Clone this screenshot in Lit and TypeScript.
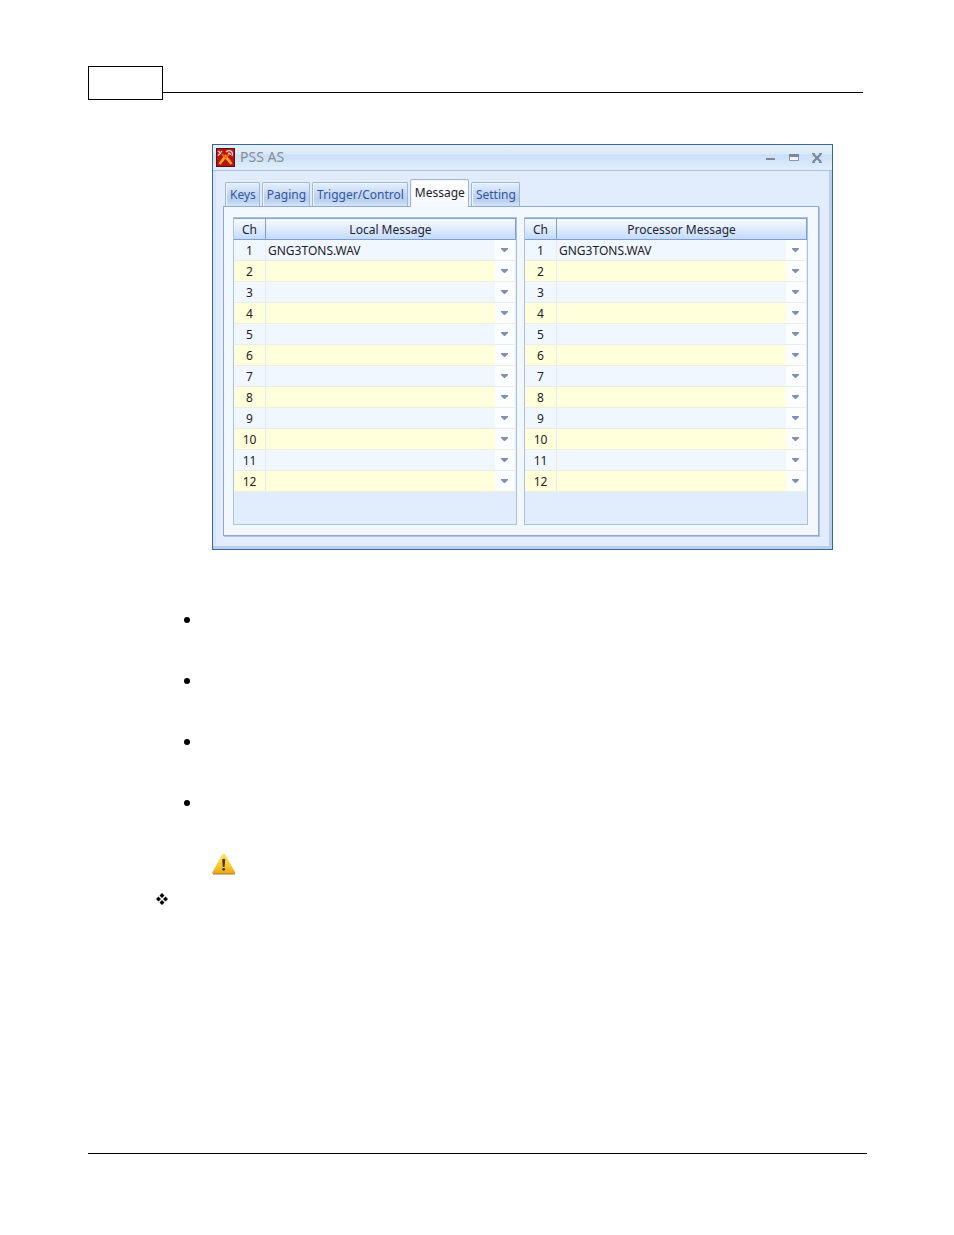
import { LitElement, html, css, svg } from "lit";
import { customElement, property, state } from "lit/decorators.js";

const CHANNELS = Array.from({ length: 12 }, (_, i) => i + 1);
const TABS = ["Keys", "Paging", "Trigger/Control", "Message", "Setting"];

@customElement("message-table")
class MessageTable extends LitElement {
  @property() heading = "";
  @property() file = "";

  static styles = css`
    :host {
      display: block;
      flex: 1;
      min-width: 0;
      min-height: 306px;
      border: 1px solid #a9c2e2;
      background: #e1ecfc;
    }
    .grid {
      width: 100%;
      border-collapse: separate;
      border-spacing: 0;
      table-layout: fixed;
      font-size: 12px;
      line-height: 18px;
      color: #222;
    }
    .ch-col {
      width: 32px;
    }
    .head {
      height: 22px;
      padding: 2px 0 0;
      box-sizing: border-box;
      font-weight: normal;
      color: #1c2430;
      background: linear-gradient(#f8fbff, #e2edfc 45%, #c4dbfa);
      border: 1px solid #7f9fd0;
      border-left: 0;
      border-top-color: #84a2cc;
    }
    .cell {
      height: 21px;
      padding: 2px 0 0;
      box-sizing: border-box;
      text-align: center;
      background: #f0f7ff;
      border-bottom: 1px solid #e6eef4;
      border-right: 1px solid #e4ecf2;
    }
    .cell.pick {
      padding: 0;
    }
    .even .cell {
      background: #ffffdc;
      border-bottom-color: #efefe0;
    }
    .field {
      display: grid;
      grid-template-columns: 1fr 20px;
    }
    .select {
      grid-area: 1 / 1 / 2 / 3;
      appearance: none;
      width: 100%;
      height: 20px;
      margin: 0;
      padding: 2px 20px 0 2px;
      border: 0;
      border-radius: 0;
      background: transparent;
      font: inherit;
      color: #222;
    }
    .arrow {
      grid-area: 1 / 2;
      width: 20px;
      height: 20px;
      background: #fbfdff;
      pointer-events: none;
    }
  `;

  render() {
    return html`
      <table class="grid">
        <colgroup>
          <col class="ch-col" />
          <col />
        </colgroup>
        <thead>
          <tr>
            <th class="head" scope="col">Ch</th>
            <th class="head" scope="col">${this.heading}</th>
          </tr>
        </thead>
        <tbody>
          ${CHANNELS.map(
            (n) => html`<tr class=${n % 2 ? "odd" : "even"}>
              <td class="cell">${n}</td>
              <td class="cell pick">
                <div class="field">
                  <select class="select" aria-label="${this.heading} ${n}">
                    <option>${n === 1 ? this.file : ""}</option>
                  </select>
                  <svg class="arrow" viewBox="0 0 20 20" aria-hidden="true">
                    <path d="M6 8h7v1l-3 3h-1l-3-3z" fill="#7f90b0" />
                  </svg>
                </div>
              </td>
            </tr>`
          )}
        </tbody>
      </table>
    `;
  }
}

const appIcon = svg`
  <rect width="19" height="19" fill="#5e1010" />
  <rect x="1" y="1" width="17" height="17" fill="#b91313" />
  <path d="M3.500 16 9.500 8.500 15.500 16" fill="none" stroke="#ffa51c" stroke-width="2.800" />
  <path d="M9.500 10 6 6M9.500 10l3.500-4" stroke="#f46a14" stroke-width="1.800" />
  <path d="M2 3l2.500 2-2.500 2.500M5 3l1 1" fill="none" stroke="#ffd9c8" stroke-width="1.400" />
  <path d="M10 4q3-3 6 0 1 2 0 4M12 5.500q2-1 2.500 1.500" fill="none" stroke="#ffd0c0" stroke-width="1.400" />`;

@customElement("app-root")
class AppRoot extends LitElement {
  @state() private active = "Message";

  static styles = css`
    :host {
      display: block;
      background: #fff;
      font-family: "Noto Sans", "Open Sans", sans-serif;
    }
    .page {
      display: flex;
      flex-direction: column;
      min-height: 100vh;
      box-sizing: border-box;
      padding: 66px 87px 81px 88px;
    }
    .top {
      display: flex;
      align-items: flex-end;
      margin-right: 4px;
    }
    .number {
      width: 73px;
      height: 32px;
      border: 1px solid #000;
    }
    .rule {
      flex: 1;
      margin-bottom: 7px;
      border-top: 1px solid #000;
    }
    .window {
      margin: 44px 34px 0 124px;
      border: 1px solid #3c6496;
      background: #e1ecfc;
      box-shadow: inset -3px -3px 0 #b9cfec, inset 3px 0 0 #d4e5f8;
    }
    .titlebar {
      display: flex;
      align-items: center;
      height: 25px;
      padding: 0 6px 0 3px;
      gap: 5px;
      border-bottom: 1px solid #aac0dd;
      background: linear-gradient(#e4effc, #dceafa 35%, #cbdef6 40%, #e2f0fc);
    }
    .app-icon {
      width: 19px;
      height: 19px;
    }
    .title {
      flex: 1;
      margin: 0;
      padding-bottom: 2px;
      font-size: 14px;
      line-height: 20px;
      font-weight: normal;
      color: #858b94;
    }
    .control {
      display: block;
      width: 18px;
      height: 18px;
      padding: 0;
      border: 0;
      background: none;
    }
    .client {
      padding: 8px 13px 13px 10px;
    }
    .tabs {
      display: flex;
      align-items: flex-end;
      gap: 2px;
      height: 27px;
      padding-left: 2px;
    }
    .tab {
      height: 24px;
      padding: 1px 3px 0 4px;
      border: 1px solid #9db6da;
      border-bottom: 0;
      border-radius: 2px 2px 0 0;
      background: linear-gradient(#e6f0fc, #c3d7f2 50%, #b9d0f0 75%, #d5e5f9);
      box-shadow: inset 1px 1px 0 #eff6fe;
      font: inherit;
      font-size: 12px;
      line-height: 22px;
      color: #34549c;
    }
    .tab.active {
      position: relative;
      height: 28px;
      margin-bottom: -1px;
      padding-bottom: 3px;
      background: linear-gradient(#fff, #f5f9ff);
      color: #1c1c24;
    }
    .panel {
      display: flex;
      gap: 7px;
      padding: 10px 10px 10px 9px;
      border: 1px solid #8fa9cf;
      background: #f3f8ff;
      box-shadow: 1px 1px 0 #b0c4e2;
    }
    .bullets {
      margin: 67px 0 0 96px;
      padding: 0;
      list-style: none;
    }
    .bullet {
      height: 61px;
    }
    .dot {
      display: block;
      width: 6px;
      height: 6px;
      border-radius: 50%;
      background: #000;
    }
    .warning {
      display: block;
      width: 24px;
      height: 22px;
      margin: -8px 0 0 124px;
    }
    .diamonds {
      display: block;
      width: 12px;
      height: 12px;
      margin: 18px 0 0 68px;
    }
    .bottom {
      width: 100%;
      margin: auto 0 0;
      border: 0;
      border-top: 1px solid #000;
    }
  `;

  render() {
    return html`
      <main class="page">
        <header class="top">
          <div class="number"></div>
          <div class="rule"></div>
        </header>
        <section class="window" aria-label="PSS AS">
          <div class="titlebar">
            <svg class="app-icon" viewBox="0 0 19 19" aria-hidden="true">${appIcon}</svg>
            <h1 class="title">PSS AS</h1>
            <button class="control" aria-label="Minimize">
              <svg width="18" height="18" viewBox="0 0 18 18"><path d="M4 9h9v2H4z" fill="#7d8795" /></svg>
            </button>
            <button class="control" aria-label="Maximize">
              <svg width="18" height="18" viewBox="0 0 18 18">
                <path d="M4.500 5.500h9v6h-9z" fill="#edf4fc" stroke="#8a94a3" />
                <path d="M4 5h10v3H4z" fill="#7d8795" />
              </svg>
            </button>
            <button class="control" aria-label="Close">
              <svg width="18" height="18" viewBox="0 0 18 18">
                <path d="M5 5l8 8M13 5l-8 8" stroke="#7d8795" stroke-width="2.200" />
                <path d="M4 4.500h3M11 4.500h3M4 13.500h3M11 13.500h3" stroke="#7d8795" />
              </svg>
            </button>
          </div>
          <div class="client">
            <div class="tabs" role="tablist">
              ${TABS.map(
                (t) => html`<button
                  class="tab ${t === this.active ? "active" : ""}"
                  role="tab"
                  aria-selected=${t === this.active}
                  @click=${() => (this.active = t)}
                >${t}</button>`
              )}
            </div>
            <div class="panel" role="tabpanel">
              <message-table heading="Local Message" file="GNG3TONS.WAV"></message-table>
              <message-table heading="Processor Message" file="GNG3TONS.WAV"></message-table>
            </div>
          </div>
        </section>
        <ul class="bullets">
          ${[0, 1, 2, 3].map(() => html`<li class="bullet"><span class="dot"></span></li>`)}
        </ul>
        <svg class="warning" viewBox="0 0 24 22" role="img" aria-label="Warning">
          <defs>
            <linearGradient id="amber" x1="0" y1="0" x2="0" y2="1">
              <stop offset="0" stop-color="#ffe45c" />
              <stop offset="0.600" stop-color="#f8c92c" />
              <stop offset="1" stop-color="#e9a21c" />
            </linearGradient>
          </defs>
          <path d="M10 2q1.500-2.500 3.500 0l9.500 17q.8 2-1.500 2h-20q-2 0-1-2z" fill="url(#amber)" />
          <path d="M1 21h22" stroke="#a87a28" stroke-width="1" />
          <path d="M10.200 6.500q1.500-1.500 3 0l-.6 7.500h-1.800z" fill="#4a3510" />
          <circle cx="11.700" cy="16.300" r="1.400" fill="#4a3510" />
        </svg>
        <svg class="diamonds" viewBox="0 0 12 12" aria-hidden="true">
          <path
            d="M6 0l2.500 2.500L6 5 3.500 2.500zM6 7l2.500 2.500L6 12 3.500 9.500zM2.500 3.500L5 6 2.500 8.500 0 6zM9.500 3.500L12 6 9.500 8.500 7 6z"
            fill="#000"
          />
        </svg>
        <hr class="bottom" />
      </main>
    `;
  }
}
